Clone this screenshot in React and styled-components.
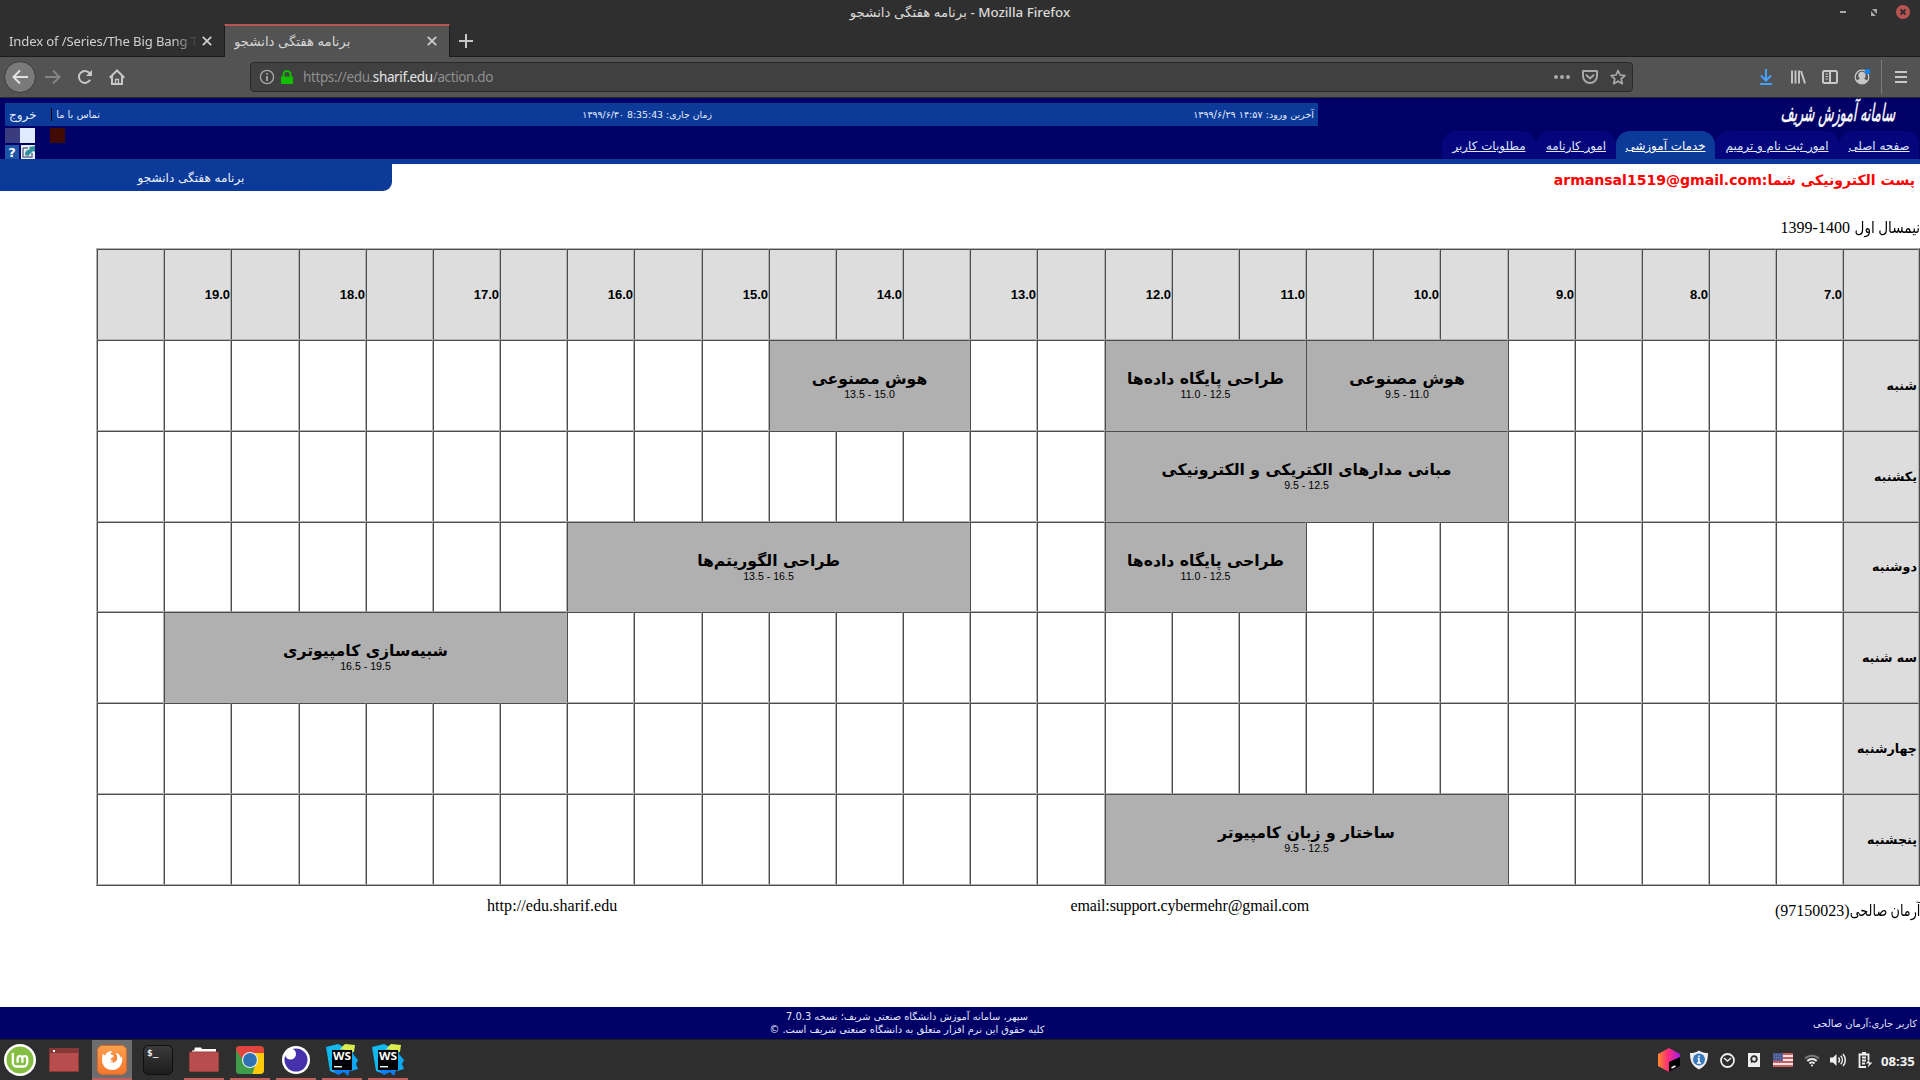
import React from "react";
import styled, { createGlobalStyle, css } from "styled-components";

const GlobalStyle = createGlobalStyle`
  * { box-sizing: border-box; }
  html, body { margin: 0; padding: 0; }
  body { background: #fff; overflow: hidden; font-family: "DejaVu Sans", sans-serif; }
`;

const Screen = styled.div`
  width: 1920px;
  height: 1080px;
  display: flex;
  flex-direction: column;
  overflow: hidden;
`;

/* ---------- browser window ---------- */

const ui = css`
  font-family: "Noto Sans", "DejaVu Sans", sans-serif;
`;

const TitleBar = styled.header`
  ${ui}
  position: relative;
  height: 24px;
  background: #2f2f2f;
  color: #dadada;
  display: flex;
  align-items: center;
  justify-content: center;
  font-size: 13.35px;
  font-weight: 500;
  white-space: pre;
`;

const WindowControls = styled.div`
  position: absolute;
  right: 10px;
  top: 5px;
  display: flex;
  gap: 16px;
`;

const TabStrip = styled.div`
  ${ui}
  height: 33px;
  background: #2f2f2f;
  border-bottom: 1px solid #1c1c1c;
  display: flex;
  align-items: stretch;
`;

const BrowserTab = styled.div`
  display: flex;
  align-items: center;
  justify-content: space-between;
  width: ${(p) => p.$width}px;
  height: ${(p) => (p.$active ? 33 : 32)}px;
  padding: ${(p) => (p.$active ? "0 12px 1px 9px" : "2px 12px 0 8px")};
  font-size: ${(p) => (p.$active ? 13.25 : 13.1)}px;
  letter-spacing: ${(p) => (p.$active ? "0" : "-0.13px")};
  color: ${(p) => (p.$active ? "#d6d6d6" : "#d0d0d0")};
  background: ${(p) => (p.$active ? "#535353" : "transparent")};
  border-left: 1px solid ${(p) => (p.$active ? "#1c1c1c" : "transparent")};
  border-right: ${(p) => (p.$active ? "1px solid #1c1c1c" : "0")};
  border-top: ${(p) => (p.$active ? "2px solid #b85552" : "0")};
`;

const TabLabel = styled.span`
  white-space: nowrap;
  overflow: hidden;
  flex: 1;
  margin-right: 5px;
  ${(p) => p.$fade && "mask-image: linear-gradient(90deg, #000 87%, transparent 101%);"}
`;

const NewTab = styled.div`
  padding: 7px 0 0 9px;
`;

const Toolbar = styled.div`
  ${ui}
  height: 41px;
  background: #535353;
  border-bottom: 1px solid #292929;
  display: flex;
  align-items: center;
`;

const NavButtons = styled.div`
  display: flex;
  align-items: center;
  width: 250px;
  padding-left: 4px;
  gap: 8px;
`;

const BackButton = styled.div`
  width: 32px;
  height: 32px;
  margin-right: -3px;
  border-radius: 50%;
  border: 1px solid #3b3b3b;
  background: #7a7a7a;
  display: grid;
  place-items: center;
`;

const IconBox = styled.div`
  width: 24px;
  height: 24px;
  display: grid;
  place-items: center;
`;

const UrlBar = styled.div`
  width: 1383px;
  height: 30px;
  border: 1px solid #292929;
  border-radius: 4px;
  background: #404040;
  display: flex;
  align-items: center;
  padding: 0 6px 0 8px;
`;

const LockIcon = styled.svg`
  margin-left: 6px;
`;

const UrlText = styled.span`
  font-size: 13.5px;
  letter-spacing: -0.38px;
  color: #8f8f8f;
  margin-left: 10px;
  flex: 1;
  white-space: nowrap;
  b { font-weight: 400; color: #e6e6e6; }
`;

const UrlActions = styled.div`
  display: flex;
  align-items: center;
  gap: 12px;
`;

const ToolbarRight = styled.div`
  display: flex;
  align-items: center;
  flex: 1;
  justify-content: flex-end;
  padding-right: 11px;
  gap: 16px;
`;

const Divider = styled.div`
  width: 1px;
  height: 34px;
  background: #7b7b7b;
  margin: 0 -5px;
`;

/* ---------- portal page ---------- */

const Page = styled.main`
  flex: 1;
  direction: rtl;
  display: flex;
  flex-direction: column;
  background: #fff;
`;

const PortalHeader = styled.div`
  height: 66px;
  background: #000066;
  border-bottom: 5px solid #0c3a98;
  display: flex;
  flex-shrink: 0;
  justify-content: space-between;
`;

const Brand = styled.div`
  width: 480px;
  display: flex;
  flex-direction: column;
  justify-content: space-between;
`;

const LogoBox = styled.div`
  height: 33px;
  padding: 0 24px 0 0;
  display: flex;
`;

const LogoText = styled.span`
  font: 400 24px/30px "DejaVu Sans", sans-serif;
  color: #fff;
  -webkit-text-stroke: 0.5px #fff;
  white-space: nowrap;
  transform: scaleX(0.52) skewX(-18deg);
  transform-origin: 100% 50%;
`;

const NavTabs = styled.nav`
  display: flex;
  height: 28px;
  padding-right: 1px;
`;

const NavTab = styled.a`
  width: ${(p) => p.$width}px;
  display: flex;
  align-items: center;
  justify-content: center;
  padding-top: 2px;
  border-radius: 14px 14px 0 0;
  background: ${(p) => (p.$active ? "#0c3a98" : "#06067c")};
  color: ${(p) => (p.$active ? "#fff" : "#dfe6ff")};
  font-size: 11.9px;
  text-decoration: underline;
  white-space: nowrap;
`;

const StatusSide = styled.div`
  width: 1318px;
  padding: 5px 0 0 5px;
  display: flex;
  flex-direction: column;
`;

const StatusStrip = styled.div`
  height: 23px;
  background: #0c3a98;
  color: #e4ecff;
  display: grid;
  grid-template-columns: 602px 1fr 45px 18px 32px;
  align-items: center;
  padding-right: 4px;
  white-space: nowrap;
`;

const StripText = styled.span`
  font-size: ${(p) => p.$size}px;
`;

const StripDivider = styled.i`
  width: 1px;
  height: 13px;
  background: #000;
  justify-self: end;
  margin-left: 14px;
`;

const Exit = styled.span`
  font-size: 12px;
  justify-self: end;
  margin-left: 4px;
`;

const Swatches = styled.div`
  direction: ltr;
  display: flex;
  margin-top: 2px;
`;

const Swatch = styled.div`
  width: 15px;
  height: 15px;
  background: ${(p) => p.$color};
  margin-left: ${(p) => p.$gap || 0}px;
`;

const MiniIcons = styled.div`
  direction: ltr;
  display: flex;
  gap: 2px;
  margin-top: 2px;
`;

const SubHeader = styled.div`
  height: 54px;
  flex-shrink: 0;
  display: flex;
  justify-content: space-between;
`;

const Email = styled.div`
  color: #f00;
  font-weight: 700;
  font-size: 14.05px;
  padding: 8px 5px 0 0;
`;

const PageTitle = styled.div`
  width: 392px;
  height: 27px;
  background: #0c3a98;
  color: #eef2ff;
  border-radius: 0 0 9px 0;
  font-size: 12px;
  text-align: center;
  padding: 7px 10px 0 0;
`;

const Term = styled.div`
  font-family: "Liberation Serif", "DejaVu Sans", serif;
  font-size: 16px;
  height: 30px;
  line-height: 20px;
  flex-shrink: 0;
`;

const Naskh = styled.span`
  display: inline-block;
  transform: scaleX(${(p) => p.$squeeze});
  transform-origin: 100% 50%;
  margin-left: ${(p) => p.$tuck}px;
`;

const columns = [
  76, 67, 67, 67, 67, 67, 68, 67, 67, 67, 67, 67, 68, 67, 67, 67, 67, 67, 68,
  67, 67, 67, 67, 67, 68, 67, 67,
];

const Timetable = styled.div`
  width: 1824px;
  flex-shrink: 0;
  border: 1px solid;
  border-color: #b2b2b2 #4c4c4c #4c4c4c #b2b2b2;
  display: grid;
  grid-template-columns: ${columns.map((c) => c + "px").join(" ")};
  grid-template-rows: 91px 91px 91px 90px 91px 91px 91px;
`;

const Cell = styled.div`
  grid-column: ${(p) => p.$col} / span ${(p) => p.$span || 1};
  grid-row: ${(p) => p.$row};
  border: 1px solid;
  border-color: #4c4c4c #b2b2b2 #b2b2b2 #4c4c4c;
  background: ${(p) => (p.$head ? "#dddddd" : "#fff")};
`;

const HourCell = styled(Cell)`
  direction: ltr;
  display: flex;
  align-items: center;
  justify-content: flex-end;
  font: 700 13px "Liberation Sans", sans-serif;
`;

const DayCell = styled(Cell)`
  display: flex;
  align-items: center;
  font: 700 12.7px "DejaVu Sans", sans-serif;
  padding: 0 1px 1px 0;
  white-space: nowrap;
`;

const Course = styled(Cell)`
  background: #b0b0b0;
  display: flex;
  flex-direction: column;
  align-items: center;
  justify-content: center;
  padding-bottom: 1px;
`;

const CourseName = styled.div`
  font: 700 15.65px/17px "DejaVu Sans", sans-serif;
  white-space: nowrap;
`;

const CourseTime = styled.div`
  direction: ltr;
  font: 10.6px/12px "Liberation Sans", sans-serif;
  margin-top: 1px;
`;

const Contact = styled.div`
  display: grid;
  grid-template-columns: 611px 1fr auto;
  font-family: "Liberation Serif", "DejaVu Sans", serif;
  font-size: 16px;
  height: 121px;
  padding: 10px 0 0 487px;
  line-height: 20px;
`;

const ContactItem = styled.span`
  padding-top: ${(p) => p.$drop || 0}px;
  letter-spacing: ${(p) => p.$track || 0}px;
`;

const PortalFooter = styled.footer`
  height: 32px;
  flex-shrink: 0;
  background: #000066;
  color: #e4e8ff;
  display: grid;
  grid-template-columns: 863px 300px 1fr;
  align-items: center;
  font-size: 9.9px;
  line-height: 13px;
  text-align: center;
  white-space: nowrap;
`;

const CurrentUser = styled.span`
  text-align: right;
  padding-right: 3px;
`;

/* ---------- desktop panel ---------- */

const Panel = styled.div`
  height: 41px;
  background: #2e2e2e;
  border-top: 1px solid #1d1d1d;
  display: flex;
  justify-content: space-between;
`;

const Launchers = styled.div`
  display: flex;
  gap: 6px;
`;

const Launcher = styled.div`
  width: 40px;
  height: 40px;
  display: grid;
  place-items: center;
  padding-top: 1px;
  padding-right: ${(p) => p.$nudge || 0}px;
  background: ${(p) => (p.$active ? "#6d6d6d" : "transparent")};
  border-bottom: 2px solid ${(p) => (p.$open ? "#c0605c" : "transparent")};
`;

const Tray = styled.div`
  display: flex;
  align-items: center;
  padding-right: 4px;
`;

const TrayItem = styled.div`
  width: ${(p) => p.$width}px;
  display: flex;
  justify-content: flex-start;
`;

const Clock = styled.span`
  font: 700 13.2px "Noto Sans", "DejaVu Sans", sans-serif;
  color: #f2f2f2;
  width: 35px;
  margin-top: 1px;
`;

/* ---------- drawings ---------- */

const Stroke = ({ w = 16, h = w, c = "#c8c8c8", sw = 2, children, vb }) => (
  <svg width={w} height={h} viewBox={vb || `0 0 ${w} ${h}`} fill="none" stroke={c} strokeWidth={sw}>
    {children}
  </svg>
);

const CloseX = () => (
  <Stroke w={10} sw={1.7} c="#cfcfcf"><path d="M.8.8 9.2 9.2M9.2.8.8 9.2" /></Stroke>
);

const MintIcon = () => (
  <svg width="32" height="32" viewBox="0 0 32 32">
    <circle cx="16" cy="16" r="16" fill="#fff" />
    <circle cx="16" cy="16" r="13.500" fill="#86be43" />
    <path d="M8.800 9v9.500a4 4 0 0 0 4 4h6.400a4 4 0 0 0 4-4v-4a2.400 2.400 0 0 0-4.800 0v4.300M18.400 14.500a2.400 2.400 0 0 0-4.800 0v4.300" fill="none" stroke="#fff" strokeWidth="2.300" />
  </svg>
);

const DesktopIcon = () => (
  <svg width="30" height="24" viewBox="0 0 30 24">
    <rect x=".5" y=".5" width="29" height="23" fill="#b84d4d" stroke="#8c3636" />
    <rect width="30" height="5" fill="#863838" />
    <rect x="4" y="2" width="2" height="2" fill="#fff" />
  </svg>
);

const FirefoxIcon = () => (
  <svg width="30" height="30" viewBox="0 0 30 30">
    <defs><linearGradient id="ff" x2="0" y2="1"><stop stopColor="#fba04d" /><stop offset="1" stopColor="#f4762f" /></linearGradient></defs>
    <rect x=".5" y=".5" width="29" height="29" rx="5" fill="url(#ff)" stroke="#d9682a" />
    <path d="M5.500 9 8 10.500C9 8 12 5.500 15 6l-1.500 3 3 1.500c.5 2-2 2-3 3.500 1 2 4 2.500 5.500 1 1.500-2 1-5-1-7 3-.5 5 2 6 5l1-2c1.500 7-2.500 14-9.500 14S5 20 5 15z" fill="#fff" />
    <path d="M17 7c3 2 4 5.500 2.500 8.500-1.500 2.500-5 2.500-6.500 1 2 .5 4-.2 4.500-2C18.500 12 18 9 17 7z" fill="#f58438" />
  </svg>
);

const TerminalIcon = () => (
  <svg width="30" height="30" viewBox="0 0 30 30">
    <defs><linearGradient id="tm" x2="0" y2="1"><stop stopColor="#3b3b3b" /><stop offset="1" stopColor="#1c1c1c" /></linearGradient></defs>
    <rect x=".5" y=".5" width="29" height="29" rx="5" fill="url(#tm)" stroke="#0f0f0f" />
    <text x="4" y="10.500" fontSize="9.500" fontWeight="700" fontFamily="DejaVu Sans Mono" fill="#f2f2f2">$_</text>
  </svg>
);

const FolderIcon = () => (
  <svg width="30" height="25" viewBox="0 0 30 25">
    <path d="M3 3.500h2L6 .5h6l1 1.500h14v4H3z" fill="#fff" />
    <rect x=".5" y="5" width="29" height="19.500" rx="1" fill="#b84d4d" stroke="#9c3e3e" />
  </svg>
);

const ChromeIcon = () => (
  <svg width="30" height="30" viewBox="0 0 30 30">
    <defs><clipPath id="cr"><rect x="1" y="1" width="28" height="28" rx="4" /></clipPath></defs>
    <g clipPath="url(#cr)">
      <rect width="30" height="30" fill="#3f9c49" />
      <path d="M15 8H30v22H17l4-12z" fill="#fbcb09" />
      <path d="M0 0h30v8H15l-7 7L0 4z" fill="#e0443c" />
      <path d="M1 5 8.500 18l8 4L15 30H0z" fill="#3f9c49" />
    </g>
    <circle cx="15" cy="15" r="8" fill="#eee" />
    <circle cx="15" cy="15" r="6.900" fill="#2f72b4" />
  </svg>
);

const MoonIcon = () => (
  <svg width="28" height="28" viewBox="0 0 28 28">
    <circle cx="14" cy="14" r="14" fill="#fff" />
    <circle cx="14" cy="14" r="11.500" fill="#4630ab" />
    <circle cx="8.500" cy="8" r="5.500" fill="#fff" />
  </svg>
);

const WebStorm = () => (
  <svg width="32" height="32" viewBox="0 0 32 32">
    <path d="M0 3 12 0 20 4 20 26 12 30 4 27Z" fill="#12b8f0" />
    <path d="M15 3 20 0 28 3 27 10 32 16 30 20 32 25 25 27Z" fill="#0ea8f2" />
    <path d="M14 5 19 0 29 1 28 8Z" fill="#dcec4e" />
    <path d="M7 26 12 31 18 28 22 32 24 26Z" fill="#0a7ef5" />
    <rect x="6" y="6" width="20" height="20" fill="#000" />
    <text x="7" y="16.200" fontSize="11" fontWeight="700" fontFamily="Noto Sans" fill="#fff" textLength="18" lengthAdjust="spacingAndGlyphs">WS</text>
    <rect x="8" y="22" width="8" height="1.400" fill="#fff" />
  </svg>
);

const ToolboxIcon = () => (
  <svg width="22" height="24" viewBox="0 0 22 24">
    <defs><linearGradient id="jb" x2="1"><stop stopColor="#ff8a2a" /><stop offset=".45" stopColor="#ff2d78" /><stop offset="1" stopColor="#a51de0" /></linearGradient></defs>
    <path d="M11 0 22 6v12l-11 6L0 18V6z" fill="url(#jb)" />
    <path d="m11 14 11-5v9l-11 6z" fill="#000" />
    <path d="m13.500 20 4-2" stroke="#fff" strokeWidth="1.500" />
  </svg>
);

const ShieldIcon = () => (
  <svg width="20" height="20" viewBox="0 0 20 20">
    <path d="M10 .5C12.500 2.500 16 3 19 3c0 8-2 13-9 16.500C3 16 1 11 1 3c3 0 6.500-.5 9-2.500z" fill="#eee" />
    <circle cx="10" cy="9.500" r="6" fill="#3a78bd" />
    <path d="M10 5.500v1.600M8.500 8.500H10v4.500M8 13h4" stroke="#fff" strokeWidth="1.500" fill="none" />
  </svg>
);

const FlagIcon = () => (
  <svg width="20" height="14" viewBox="0 0 20 14">
    <rect width="20" height="14" fill="#eeeaea" />
    <path d="M0 1h20M0 5h20M0 9h20M0 13h20" stroke="#cf5a5e" strokeWidth="2" />
    <rect width="10" height="8" fill="#47568f" />
    <path d="M1 2h9M1 4.500h9M1 7h9" stroke="#8b95bd" strokeWidth=".8" strokeDasharray="1 1" />
  </svg>
);

const navTabs = [
  ["صفحه اصلی", 80],
  ["امور ثبت نام و ترمیم", 124],
  ["خدمات آموزشی", 99, true],
  ["امور کارنامه", 80],
  ["مطلوبات کاربر", 94],
];

const days = ["شنبه", "یکشنبه", "دوشنبه", "سه شنبه", "چهارشنبه", "پنجشنبه"];

const courses = [
  { day: 0, from: 9.5, to: 11, name: "هوش مصنوعی" },
  { day: 0, from: 11, to: 12.5, name: "طراحی پایگاه داده‌ها" },
  { day: 0, from: 13.5, to: 15, name: "هوش مصنوعی" },
  { day: 1, from: 9.5, to: 12.5, name: "مبانی مدارهای الکتریکی و الکترونیکی" },
  { day: 2, from: 11, to: 12.5, name: "طراحی پایگاه داده‌ها" },
  { day: 2, from: 13.5, to: 16.5, name: "طراحی الگوریتم‌ها" },
  { day: 3, from: 16.5, to: 19.5, name: "شبیه‌سازی کامپیوتری" },
  { day: 5, from: 9.5, to: 12.5, name: "ساختار و زبان کامپیوتر" },
];

const slotOf = (hour) => (hour - 7) * 2;

function Schedule() {
  const cells = [<Cell key="corner" $head $row={1} $col={1} />];
  for (let s = 0; s < 26; s++) {
    cells.push(
      <HourCell key={`h${s}`} $head $row={1} $col={s + 2}>
        {s % 2 === 0 ? (7 + s / 2).toFixed(1) : ""}
      </HourCell>
    );
  }
  days.forEach((day, d) => {
    cells.push(<DayCell key={day} $head $row={d + 2} $col={1}><span>{day}</span></DayCell>);
    const todays = courses.filter((c) => c.day === d);
    for (let s = 0; s < 26; s++) {
      const course = todays.find((c) => s >= slotOf(c.from) && s < slotOf(c.to));
      if (!course) cells.push(<Cell key={`${d}-${s}`} $row={d + 2} $col={s + 2} />);
      else if (slotOf(course.from) === s)
        cells.push(
          <Course key={`${d}-${s}`} $row={d + 2} $col={s + 2} $span={slotOf(course.to) - s}>
            <CourseName>{course.name}</CourseName>
            <CourseTime>{`${course.from.toFixed(1)} - ${course.to.toFixed(1)}`}</CourseTime>
          </Course>
        );
    }
  });
  return <Timetable>{cells}</Timetable>;
}

export default function App() {
  return (
    <Screen>
      <GlobalStyle />
      <TitleBar>
        <span>برنامه هفتگی دانشجو - Mozilla Firefox</span>
        <WindowControls>
          <Stroke w={14} c="#a8a8a8"><path d="M4 7h6" /></Stroke>
          <svg width="14" height="14"><path d="M6 4h5v5zM5 6v5h5z" fill="#a8a8a8" /></svg>
          <svg width="14" height="14"><circle cx="7" cy="7" r="7" fill="#b85552" /><path d="m4.500 4.500 5 5m0-5-5 5" stroke="#2f2f2f" strokeWidth="2" /></svg>
        </WindowControls>
      </TitleBar>
      <TabStrip>
        <BrowserTab $width={224}>
          <TabLabel $fade>Index of /Series/The Big Bang T</TabLabel>
          <CloseX />
        </BrowserTab>
        <BrowserTab $width={226} $active>
          <TabLabel>برنامه هفتگی دانشجو</TabLabel>
          <CloseX />
        </BrowserTab>
        <NewTab><Stroke w={14}><path d="M7 0v14M0 7h14" /></Stroke></NewTab>
      </TabStrip>
      <Toolbar>
        <NavButtons>
          <BackButton><Stroke c="#e2e2e2"><path d="M16 8H1.500M8 1.500 1.500 8 8 14.500" /></Stroke></BackButton>
          <IconBox><Stroke c="#858585"><path d="M0 8h14.500M8 1.500 14.500 8 8 14.500" /></Stroke></IconBox>
          <IconBox><Stroke><path d="M13.200 10.800A6 6 0 1 1 12.500 4" /><path d="M15 1v6H9z" fill="#c8c8c8" stroke="none" /></Stroke></IconBox>
          <IconBox><Stroke><path d="M.7 8.700 8 1.500l7.300 7.200M3 7v8h10V7" /><path d="M6.500 15v-4.500h3V15" strokeWidth="1.300" /></Stroke></IconBox>
        </NavButtons>
        <UrlBar>
          <Stroke sw={1.3} c="#a9a9a9"><circle cx="8" cy="8" r="6.600" /><path d="M8 7v5M8 4v1.600" strokeWidth="1.800" /></Stroke>
          <LockIcon width="12" height="14" viewBox="0 0 12 14"><path d="M0 6.500h12V14H0z" fill="#12bc00" /><path d="M2.500 7V4.500a3.500 3.500 0 0 1 7 0V7" stroke="#12bc00" strokeWidth="2" fill="none" /></LockIcon>
          <UrlText>https://edu.<b>sharif.edu</b>/action.do</UrlText>
          <UrlActions>
            <svg width="16" height="16" fill="#a9a9a9"><circle cx="2" cy="8" r="2" /><circle cx="8" cy="8" r="2" /><circle cx="14" cy="8" r="2" /></svg>
            <Stroke c="#a9a9a9"><path d="M1 2h14v5a7 7 0 0 1-14 0z" strokeLinejoin="round" /><path d="m4.500 6.200 3.500 3.300 3.500-3.300" strokeLinecap="round" /></Stroke>
            <Stroke c="#a9a9a9" sw={1.7}><path d="m8 1.500 2 4.500 4.900.5-3.700 3.300 1.100 4.900L8 12.200l-4.300 2.500 1.100-4.900L1.100 6.500 6 6z" strokeLinejoin="round" /></Stroke>
          </UrlActions>
        </UrlBar>
        <ToolbarRight>
          <Stroke c="#45a1ff"><path d="M8 0v11M3 6.500l5 5 5-5M2 15h12" /></Stroke>
          <Stroke><path d="M2 1.500v13M5.500 1.500v13M9 1.500v13M11 2l4 12.500" strokeWidth="1.900" /></Stroke>
          <Stroke><rect x="1" y="2" width="14" height="12" rx="1.500" /><path d="M8 2v12" /><path d="M3.500 5H6M3.500 7.500H6M3.500 10H6" strokeWidth="1" /></Stroke>
          <Stroke sw={1.3}><circle cx="8" cy="8" r="6.800" /><circle cx="8" cy="6.500" r="3" fill="#c8c8c8" /><path d="M3.500 12c2-2.500 7-2.500 9 0-2 2.500-7 2.500-9 0z" fill="#c8c8c8" /><circle cx="13.500" cy="2.500" r="2.600" fill="#0a84ff" stroke="none" /></Stroke>
          <Divider />
          <Stroke><path d="M2 3h12M2 8h12M2 13h12" /></Stroke>
        </ToolbarRight>
      </Toolbar>

      <Page>
        <PortalHeader>
          <Brand>
            <LogoBox><LogoText>سامانه آموزش شریف</LogoText></LogoBox>
            <NavTabs>
              {navTabs.map(([label, width, active]) => (
                <NavTab key={label} $width={width} $active={active}>{label}</NavTab>
              ))}
            </NavTabs>
          </Brand>
          <StatusSide>
            <StatusStrip>
              <StripText $size={9.6}>آخرین ورود: ۱۴:۵۷ ۱۳۹۹/۶/۲۹</StripText>
              <StripText $size={9.4}>زمان جاری: 8:35:43 ۱۳۹۹/۶/۳۰</StripText>
              <StripText $size={9.9}>تماس با ما</StripText>
              <StripDivider />
              <Exit>خروج</Exit>
            </StatusStrip>
            <Swatches>
              <Swatch $color="#3b3b80" />
              <Swatch $color="#dfeaff" />
              <Swatch $color="#400a00" $gap={15} />
            </Swatches>
            <MiniIcons>
              <svg width="14" height="14"><rect width="14" height="14" fill="#1d55a8" /><text x="7" y="12" fontSize="13" fontWeight="700" textAnchor="middle" fill="#fff">?</text></svg>
              <svg width="14" height="14"><rect width="14" height="14" fill="#e6f0f4" /><path d="M2 3v9h9V8M2 3h5" fill="none" stroke="#6a6a90" strokeWidth="1.500" /><path d="M4 10c0-4 2-5 5-6L8 2l6-1v6l-2-1-5 5z" fill="#2f8fa0" /></svg>
            </MiniIcons>
          </StatusSide>
        </PortalHeader>
        <SubHeader>
          <Email>پست الکترونیکی شما:armansal1519@gmail.com</Email>
          <PageTitle>برنامه هفتگی دانشجو</PageTitle>
        </SubHeader>
        <Term><Naskh $squeeze={0.85} $tuck={-11}>نیمسال اول</Naskh> <bdi dir="ltr">1399-1400</bdi></Term>
        <Schedule />
        <Contact>
          <ContactItem $drop={5}><Naskh $squeeze={0.8} $tuck={-18}>آرمان صالحی</Naskh>(97150023)</ContactItem>
          <ContactItem $track={-0.14}>email:support.cybermehr@gmail.com</ContactItem>
          <ContactItem $track={0.07}>http://edu.sharif.edu</ContactItem>
        </Contact>
        <PortalFooter>
          <CurrentUser>کاربر جاری:آرمان صالحی</CurrentUser>
          <div>
            <div>سپهر، سامانه آموزش دانشگاه صنعتی شریف؛ نسخه 7.0.3</div>
            <div>کلیه حقوق این نرم افزار متعلق به دانشگاه صنعتی شریف است. ©</div>
          </div>
        </PortalFooter>
      </Page>

      <Panel>
        <Launchers>
          <Launcher><MintIcon /></Launcher>
          <Launcher $nudge={4}><DesktopIcon /></Launcher>
          <Launcher $active $open><FirefoxIcon /></Launcher>
          <Launcher><TerminalIcon /></Launcher>
          <Launcher $open><FolderIcon /></Launcher>
          <Launcher $open><ChromeIcon /></Launcher>
          <Launcher $open><MoonIcon /></Launcher>
          <Launcher $open><WebStorm /></Launcher>
          <Launcher $open><WebStorm /></Launcher>
        </Launchers>
        <Tray>
          <TrayItem $width={31}><ToolboxIcon /></TrayItem>
          <TrayItem $width={31}><ShieldIcon /></TrayItem>
          <TrayItem $width={28}><Stroke w={15} c="#eee" sw={1.8}><circle cx="7.500" cy="7.500" r="6.500" /><path d="m4 5 3.500 3L11 5" strokeWidth="1.500" /></Stroke></TrayItem>
          <TrayItem $width={25}><svg width="12" height="14"><rect width="12" height="14" fill="#eee" /><circle cx="6" cy="6" r="2.800" fill="none" stroke="#2e2e2e" strokeWidth="1.800" /><path d="M3.600 6.500V9.800" stroke="#2e2e2e" strokeWidth="1.400" /></svg></TrayItem>
          <TrayItem $width={31}><FlagIcon /></TrayItem>
          <TrayItem $width={26}><Stroke w={16} h={14} c="#eee"><path d="M1 5.500a10 10 0 0 1 14 0" stroke="#777" /><path d="M3.300 8a6.800 6.800 0 0 1 9.400 0M5.500 10.500a3.600 3.600 0 0 1 5 0" /><circle cx="8" cy="12.500" r="1" fill="#eee" stroke="none" /></Stroke></TrayItem>
          <TrayItem $width={28}><Stroke w={16} h={14} c="#eee" sw={1.5}><path d="M0 4.500h3L6.500 1v12L3 9.500H0z" fill="#eee" stroke="none" /><path d="M8.500 4.500a4 4 0 0 1 0 5M10.800 2.800a6.500 6.500 0 0 1 0 8.400M13 1a9 9 0 0 1 0 12" /></Stroke></TrayItem>
          <TrayItem $width={23}><Stroke w={15} h={16} c="#eee" sw={1.8}><path d="M8 15H1.500V2.500h9V8M4 1h4M4 5.500h4M4 8.500h4M4 11.500h3" /><path d="m11 7.500-3 4h3l-1.500 4 5-5h-3z" fill="#eee" stroke="none" /></Stroke></TrayItem>
          <Clock>08:35</Clock>
        </Tray>
      </Panel>
    </Screen>
  );
}
